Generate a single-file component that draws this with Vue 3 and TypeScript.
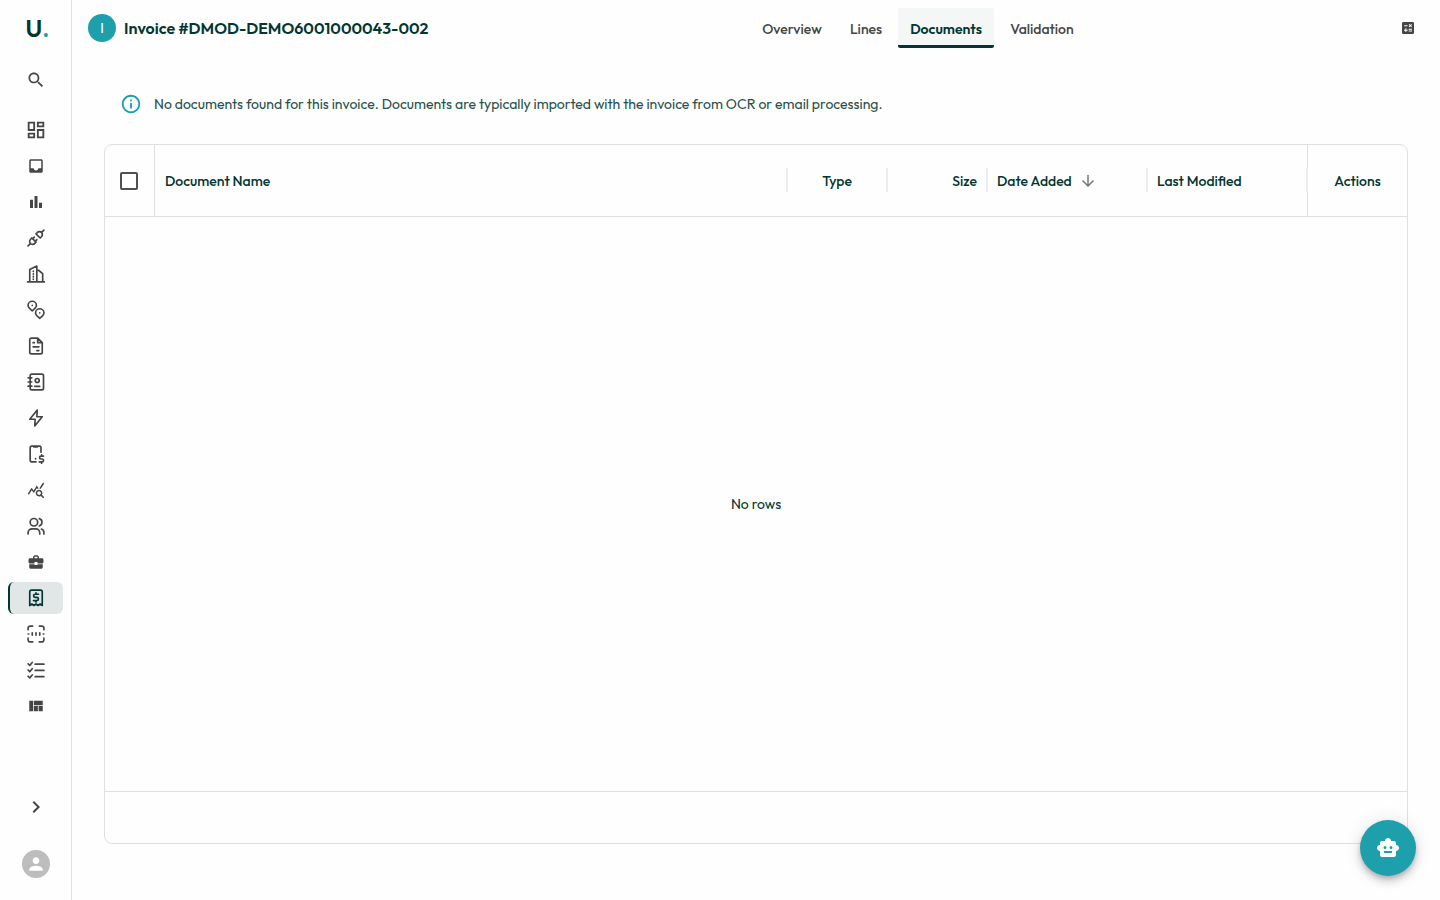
<script setup lang="ts">
import { ref } from 'vue'

interface NavItem {
  label: string
  size: number
  fill?: string
  stroke?: string
}

const navItems: NavItem[] = [
  { label: 'Dashboard', size: 22, fill: 'M19 5v2h-4V5h4M9 5v6H5V5h4m10 8v6h-4v-6h4M9 17v2H5v-2h4M21 3h-8v6h8V3zM11 3H3v10h8V3zm10 8h-8v10h8V11zm-10 4H3v6h8v-6z' },
  { label: 'Inbox', size: 18, fill: 'M19 3H4.99c-1.11 0-1.98.89-1.98 2L3 19c0 1.1.88 2 1.99 2H19c1.1 0 2-.9 2-2V5c0-1.11-.9-2-2-2zm0 12h-4c0 1.66-1.35 3-3 3s-3-1.34-3-3H4.99V5H19v10z' },
  { label: 'Reports', size: 18, fill: 'M4 9h4v11H4zm12 4h4v7h-4zm-6-9h4v16h-4z' },
  { label: 'Connections', size: 20, stroke: 'M7 12l5 5-1.5 1.5a3.54 3.54 0 1 1-5-5zM17 12l-5-5 1.5-1.5a3.54 3.54 0 1 1 5 5zM2.5 21.5l3-3M18.5 5.5l3-3M10 11l-2 2M13 14l-2 2' },
  { label: 'Buildings', size: 20, stroke: 'M2 21.5h20M4.500 21V6.500L13 2.500V21M13 7.500h2l5 4V21M8.800 8.500v.600M8.800 11.700v.600M8.800 14.900v.600M8.800 18v.600' },
  { label: 'Locations', size: 20, stroke: 'M7.500 13C4.500 10.500 2.500 8.500 2.500 6.500a5 5 0 0 1 10 0c0 2-2 4-5 6.500zM16.500 22c-3-2.500-5-4.500-5-6.500a5 5 0 0 1 10 0c0 2-2 4-5 6.500zM7.500 6.500v.100M16.500 15.500v.100' },
  { label: 'Documents', size: 20, stroke: 'M14 2.500H6.500A2 2 0 0 0 4.500 4.500v15a2 2 0 0 0 2 2h11a2 2 0 0 0 2-2V8zM14 2.500V8h5.500M8.500 8h1.500M8.500 13h7M13 17.500h2.500' },
  { label: 'Contacts', size: 20, stroke: 'M7 2.500h12a2 2 0 0 1 2 2v15a2 2 0 0 1-2 2H7a2 2 0 0 1-2-2v-15a2 2 0 0 1 2-2zM2.500 7h4.500M2.500 12h4.500M2.500 17h4.500M10.500 17.200h6M13.500 7.800a2.400 2.400 0 1 0 0 4.800 2.400 2.400 0 0 0 0-4.800z' },
  { label: 'Energy', size: 20, stroke: 'M13.500 2.500L4.500 13.500h6.500l-.500 8 9-11h-6.500z' },
  { label: 'Mobile payments', size: 20, stroke: 'M12 21.500H7a2 2 0 0 1-2-2v-15a2 2 0 0 1 2-2h9a2 2 0 0 1 2 2V10M9.500 2.500v1h4v-1M11.500 17.500v.500M21 14.500h-3a1.700 1.700 0 0 0 0 3.500h1.300a1.700 1.700 0 0 1 0 3.500H16M18.700 13v1.500M18.700 21.500V23' },
  { label: 'Analysis', size: 18, fill: 'M19.880 18.470c.440-.700.700-1.510.700-2.390 0-2.490-2.010-4.500-4.500-4.500s-4.500 2.010-4.500 4.500 2.010 4.500 4.490 4.500c.880 0 1.700-.260 2.390-.700L21.580 23 23 21.580l-3.120-3.110zm-3.800.110c-1.380 0-2.500-1.120-2.500-2.500s1.120-2.500 2.500-2.500 2.500 1.120 2.500 2.500-1.120 2.500-2.500 2.500zm-.360-8.500c-.740.020-1.450.180-2.100.450l-.550-.830-3.800 6.180-3.010-3.520-3.630 5.810L1 17l5-8 3 3.500L13 6l2.720 4.080zm2.590.500c-.640-.280-1.330-.450-2.050-.490L21.380 2 23 3.180l-4.690 7.400z' },
  { label: 'Users', size: 20, stroke: 'M9.500 3a4.500 4.500 0 1 0 0 9 4.500 4.500 0 0 0 0-9zM2.500 21.500V20a4.500 4.500 0 0 1 4.500-4.500h5a4.500 4.500 0 0 1 4.500 4.500v1.500M16 3.200a4.500 4.500 0 0 1 0 8.600M18.500 15.700a4.500 4.500 0 0 1 3 4.300v1.500' },
  { label: 'Business', size: 18, fill: 'M10 16v-1H3.010L3 19c0 1.110.890 2 2 2h14c1.110 0 2-.890 2-2v-4h-7v1h-4zm10-9h-4.010V5l-2-2h-4l-2 2v2H4c-1.100 0-2 .900-2 2v3c0 1.110.890 2 2 2h6v-2h4v2h6c1.100 0 2-.900 2-2V9c0-1.100-.900-2-2-2zm-6 0h-4V5h4v2z' },
  { label: 'Invoices', size: 20, stroke: 'M4.500 21V4.500a2 2 0 0 1 2-2h11a2 2 0 0 1 2 2V21l-2.500-1.800-2.500 1.800-2.500-1.800L9.500 21 7 19.200zM15 7.500h-4a1.900 1.900 0 0 0 0 3.800h2a1.900 1.900 0 0 1 0 3.800H9M12 5.800v1.700M12 15.100v1.600' },
  { label: 'Scan', size: 20, stroke: 'M2.500 7V5a2.500 2.500 0 0 1 2.500-2.500h3M16 2.500h3A2.500 2.500 0 0 1 21.500 5v2M21.500 17v2a2.500 2.500 0 0 1-2.500 2.500h-3M8 21.500H5A2.500 2.500 0 0 1 2.500 19v-2M2.500 12h.800M7.500 10.500v3M12 10.500v3M16.500 10.500v3M20.700 12h.800' },
  { label: 'Tasks', size: 20, stroke: 'M2.500 4.500L4.500 6.500l3-3.500M2.500 12l2 2 3-3.500M2.500 19.500l2 2 3-3.500M11 5h10.500M11 12.500h10.500M11 20h10.500' },
  { label: 'Views', size: 18, fill: 'M3 5h5v14H3zM9 5h12v6H9zM9 12h5.500v7H9zM15.500 12H21v7h-5.500z' },
]
const activeNav = ref('Invoices')

const tabs = ['Overview', 'Lines', 'Documents', 'Validation']
const activeTab = ref('Documents')
const allSelected = ref(false)
</script>

<template>
  <div class="app">
    <aside class="sidebar">
      <a class="logo" href="#" aria-label="Home">U<span>.</span></a>
      <button class="search" type="button" aria-label="Search">
        <svg width="20" height="20" viewBox="0 0 24 24" fill="currentColor"><path d="M15.500 14h-.790l-.280-.270C15.410 12.590 16 11.110 16 9.500 16 5.910 13.090 3 9.500 3S3 5.910 3 9.500 5.910 16 9.500 16c1.610 0 3.090-.590 4.230-1.570l.270.280v.790l5 4.990L20.490 19l-4.990-5zm-6 0C7.010 14 5 11.990 5 9.500S7.010 5 9.500 5 14 7.010 14 9.500 11.990 14 9.500 14z" /></svg>
      </button>
      <nav class="nav">
        <a
          v-for="item in navItems"
          :key="item.label"
          href="#"
          class="nav-item"
          :class="{ active: item.label === activeNav }"
          :aria-label="item.label"
          @click.prevent="activeNav = item.label"
        >
          <svg :width="item.size" :height="item.size" viewBox="0 0 24 24">
            <path v-if="item.fill" :d="item.fill" fill="currentColor" />
            <path v-else :d="item.stroke" class="line" />
          </svg>
        </a>
      </nav>
      <button class="expand" type="button" aria-label="Expand menu">
        <svg width="24" height="24" viewBox="0 0 24 24" fill="currentColor"><path d="M10 6 8.590 7.410 13.170 12l-4.580 4.590L10 18l6-6z" /></svg>
      </button>
      <button class="account" type="button" aria-label="Account">
        <svg width="20" height="20" viewBox="0 0 24 24" fill="currentColor"><path d="M12 12c2.210 0 4-1.790 4-4s-1.790-4-4-4-4 1.790-4 4 1.790 4 4 4zm0 2c-2.670 0-8 1.340-8 4v2h16v-2c0-2.660-5.330-4-8-4z" /></svg>
      </button>
    </aside>

    <div class="page">
      <header class="header">
        <div class="heading">
          <span class="badge">I</span>
          <h1>Invoice #DMOD-DEMO6001000043-002</h1>
        </div>
        <div class="tabs" role="tablist">
          <button
            v-for="tab in tabs"
            :key="tab"
            type="button"
            role="tab"
            class="tab"
            :class="[tab.toLowerCase(), { active: tab === activeTab }]"
            :aria-selected="tab === activeTab"
            @click="activeTab = tab"
          >{{ tab }}</button>
        </div>
        <button class="calc" type="button" aria-label="Calculator">
          <svg width="16" height="16" viewBox="0 0 24 24" fill="currentColor"><path fill-rule="evenodd" d="M19 3H5c-1.100 0-2 .900-2 2v14c0 1.100.900 2 2 2h14c1.100 0 2-.900 2-2V5c0-1.100-.900-2-2-2zm-5.970 4.060L14.090 6l1.410 1.410L16.910 6l1.060 1.060-1.410 1.410 1.410 1.410-1.060 1.060-1.410-1.400-1.410 1.410-1.060-1.060 1.410-1.410-1.410-1.420zm-6.780.660h5v1.500h-5v-1.500zM11.500 16h-2v2H8v-2H6v-1.500h2v-2h1.500v2h2V16zm6.500 1.250h-5v-1.500h5v1.500zm0-2.500h-5v-1.500h5v1.500z" /></svg>
        </button>
      </header>

      <main class="content">
        <div class="notice" role="status">
          <svg width="22" height="22" viewBox="0 0 24 24" fill="currentColor"><path d="M11 7h2v2h-2zm0 4h2v6h-2zm1-9C6.480 2 2 6.480 2 12s4.480 10 10 10 10-4.480 10-10S17.520 2 12 2zm0 18c-4.410 0-8-3.590-8-8s3.590-8 8-8 8 3.590 8 8-3.590 8-8 8z" /></svg>
          <p>No documents found for this invoice. Documents are typically imported with the invoice from OCR or email processing.</p>
        </div>

        <section class="grid-card">
          <table class="grid">
            <colgroup>
              <col class="w-check"><col><col class="w-small"><col class="w-small"><col class="w-date"><col class="w-date"><col class="w-small">
            </colgroup>
            <thead>
              <tr>
                <th class="check" scope="col"><input v-model="allSelected" type="checkbox" aria-label="Select all rows"></th>
                <th class="split" scope="col">Document Name</th>
                <th class="split center" scope="col">Type</th>
                <th class="split right" scope="col">Size</th>
                <th class="split" scope="col" aria-sort="descending">
                  <span class="sorted">Date Added
                    <svg width="18" height="18" viewBox="0 0 24 24" fill="currentColor"><path d="m20 12-1.410-1.410L13 16.170V4h-2v12.170l-5.580-5.590L4 12l8 8 8-8z" /></svg>
                  </span>
                </th>
                <th class="split" scope="col">Last Modified</th>
                <th class="actions center" scope="col">Actions</th>
              </tr>
            </thead>
          </table>
          <div class="empty">No rows</div>
          <div class="grid-footer"></div>
        </section>
      </main>
    </div>

    <button class="fab" type="button" aria-label="Assistant">
      <svg width="24" height="24" viewBox="0 0 24 24" fill="currentColor"><path fill-rule="evenodd" d="M20 9V7c0-1.100-.900-2-2-2h-3c0-1.660-1.340-3-3-3S9 3.340 9 5H6c-1.100 0-2 .900-2 2v2c-1.660 0-3 1.340-3 3s1.340 3 3 3v4c0 1.100.900 2 2 2h12c1.100 0 2-.900 2-2v-4c1.660 0 3-1.340 3-3s-1.340-3-3-3zM7.500 11.500a1.500 1.500 0 1 1 3 0 1.500 1.500 0 0 1-3 0zM16 17H8v-2h8v2zm-1-4a1.500 1.500 0 1 1 0-3 1.500 1.500 0 0 1 0 3z" /></svg>
    </button>
  </div>
</template>

<style>
body {
  margin: 0;
  background: #fefefe;
}
</style>

<style scoped>
.app {
  display: flex;
  min-height: 100vh;
  color: #033632;
  font-family: Outfit, Lato, "Liberation Sans", sans-serif;
  font-size: 14px;
  line-height: 20px;
}
.app *,
.app *::after {
  box-sizing: border-box;
}
button {
  padding: 0;
  border: 0;
  background: none;
  color: #454545;
  font: inherit;
  cursor: pointer;
}
svg {
  display: block;
  flex: none;
}
.sidebar {
  display: flex;
  flex: none;
  flex-direction: column;
  align-items: center;
  width: 72px;
  padding: 12px 8px 20px;
  border-right: 1px solid #e0e0e0;
}
.logo {
  padding-left: 4px;
  color: #033632;
  font-size: 24px;
  font-weight: 600;
  line-height: 32px;
  text-decoration: none;
}
.logo span {
  color: #1e9fac;
}
.search {
  display: grid;
  place-items: center;
  width: 40px;
  height: 32px;
  margin: 20px 0 18px;
}
.nav {
  display: flex;
  flex-direction: column;
  gap: 4px;
  align-self: stretch;
}
.nav-item {
  display: grid;
  place-items: center;
  height: 32px;
  padding-right: 1px;
  border-left: 2px solid transparent;
  border-radius: 6px;
  color: #454545;
}
.nav-item.active {
  border-left-color: #033632;
  background: #e1e7e6;
  color: #033632;
}
.line {
  fill: none;
  stroke: currentColor;
  stroke-width: 2;
  stroke-linecap: round;
  stroke-linejoin: round;
}
.expand {
  display: grid;
  place-items: center;
  width: 32px;
  height: 32px;
  margin-top: auto;
}
.account {
  display: grid;
  place-items: center;
  width: 28px;
  height: 28px;
  margin: 27px 0 2px;
  border-radius: 50%;
  background: #bdbdbd;
  color: #fff;
}
.page {
  display: flex;
  flex: 1;
  flex-direction: column;
  min-width: 0;
}
.header {
  display: flex;
  align-items: center;
  height: 56px;
  padding: 0 16px;
}
.heading {
  display: flex;
  align-items: center;
  gap: 8px;
  min-width: 356px;
}
.badge {
  display: grid;
  place-items: center;
  width: 28px;
  height: 28px;
  border-radius: 50%;
  background: #1e9fac;
  color: #fff;
}
h1 {
  margin: 0;
  font-size: 16px;
  font-weight: 600;
  line-height: 24px;
  white-space: nowrap;
}
.tabs {
  display: flex;
  flex: 1;
  justify-content: center;
  gap: 4px;
}
.tab {
  height: 40px;
  padding-top: 4px;
  border-bottom: 3px solid transparent;
  border-radius: 2px;
  font-weight: 500;
}
.overview {
  width: 84px;
}
.lines {
  width: 56px;
}
.documents {
  width: 96px;
}
.validation {
  width: 88px;
}
.tab.active {
  border-bottom-color: #033632;
  background: #f5f7f7;
  color: #033632;
  font-weight: 600;
}
.calc {
  display: grid;
  place-items: center;
  width: 32px;
  height: 32px;
}
.content {
  display: flex;
  flex: 1;
  flex-direction: column;
  gap: 16px;
  padding: 24px 32px 56px;
}
.notice {
  display: flex;
  align-items: center;
  gap: 12px;
  height: 48px;
  padding: 0 16px;
  color: #1e9fac;
}
.notice p {
  margin: 0;
  color: #27504c;
}
.grid-card {
  display: flex;
  flex: 1;
  flex-direction: column;
  overflow: hidden;
  border: 1px solid #e0e0e0;
  border-radius: 8px;
}
.grid {
  width: 100%;
  border-collapse: separate;
  border-spacing: 0;
  table-layout: fixed;
}
.w-check {
  width: 50px;
}
.w-small {
  width: 100px;
}
.w-date {
  width: 160px;
}
th {
  height: 72px;
  padding: 0 10px;
  border-bottom: 1px solid #e0e0e0;
  font-weight: 500;
  text-align: left;
  white-space: nowrap;
}
.split {
  position: relative;
}
.split::after {
  position: absolute;
  top: 23px;
  right: -1px;
  width: 2px;
  height: 24px;
  background: #ededed;
  content: "";
}
.center {
  text-align: center;
}
.right {
  text-align: right;
}
.check {
  padding: 0 1px 0 0;
  border-right: 1px solid #e0e0e0;
  text-align: center;
}
.check input {
  display: block;
  width: 18px;
  height: 18px;
  margin: 0 auto;
  border: 2px solid #505050;
  border-radius: 2px;
  appearance: none;
}
.check input:checked {
  background: #033632;
}
.actions {
  border-left: 1px solid #e0e0e0;
}
.sorted {
  display: flex;
  align-items: center;
  gap: 7px;
}
.sorted svg {
  color: #757575;
}
.empty {
  display: grid;
  flex: 1;
  place-items: center;
}
.grid-footer {
  height: 52px;
  border-top: 1px solid #e0e0e0;
}
.fab {
  position: fixed;
  right: 24px;
  bottom: 24px;
  display: grid;
  place-items: center;
  width: 56px;
  height: 56px;
  border-radius: 50%;
  background: #1e9fac;
  box-shadow: 0 3px 5px -1px rgba(0, 0, 0, 0.2), 0 6px 10px rgba(0, 0, 0, 0.14), 0 1px 18px rgba(0, 0, 0, 0.12);
  color: #fff;
}
</style>
